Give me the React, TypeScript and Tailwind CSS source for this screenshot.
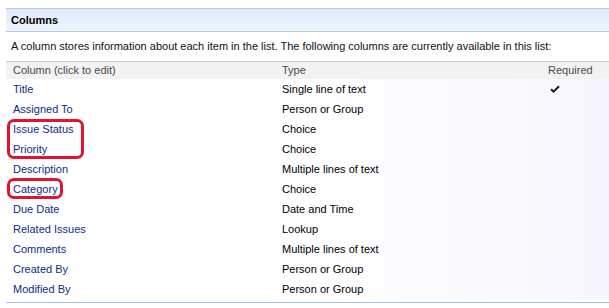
import React from "react";

const rows: { name: string; type: string; req?: boolean }[] = [
  { name: "Title", type: "Single line of text", req: true },
  { name: "Assigned To", type: "Person or Group" },
  { name: "Issue Status", type: "Choice" },
  { name: "Priority", type: "Choice" },
  { name: "Description", type: "Multiple lines of text" },
  { name: "Category", type: "Choice" },
  { name: "Due Date", type: "Date and Time" },
  { name: "Related Issues", type: "Lookup" },
  { name: "Comments", type: "Multiple lines of text" },
  { name: "Created By", type: "Person or Group" },
  { name: "Modified By", type: "Person or Group" },
];

export default function App() {
  return (
    <div
      className="w-[609px] h-[308px] bg-white overflow-hidden pl-[6px] pt-[8px] text-[11px] leading-none"
      style={{ fontFamily: "Tahoma, 'Liberation Sans', Arial, sans-serif" }}
    >
      <div className="h-[24px] border-t border-b border-[#b3cbec] bg-gradient-to-b from-[#dfeafb] to-[#eef4fd] flex items-center pl-[5px] pt-[1px] font-bold text-black">
        Columns
      </div>
      <div className="h-[29px] flex items-center pl-[5px] text-[#111]">
        A column stores information about each item in the list. The following columns are currently available in this list:
      </div>
      <div className="relative border-b border-[#a8c3e0] pb-[3px]">
        <div className="h-[18px] border-t border-[#c8c8c8] bg-[#f2f2f2] flex items-center text-[#4a4a4a]">
          <div className="w-[276px] pl-[7px]">Column (click to edit)</div>
          <div className="w-[266px]">Type</div>
          <div>Required</div>
        </div>
        {rows.map((r) => (
          <div
            key={r.name}
            className="h-[20px] flex items-center bg-gradient-to-r from-white via-white to-[#f7f6fd]"
          >
            <div className="w-[276px] pl-[7px] text-[#0b2c8a]">{r.name}</div>
            <div className="w-[266px] text-black">{r.type}</div>
            {r.req ? (
              <svg width="10" height="8" viewBox="0 0 10 8" className="ml-[2px] mb-[1px]">
                <path d="M1 4.2 L3.6 6.6 L9 1.2" fill="none" stroke="#1a1a1a" strokeWidth="2" />
              </svg>
            ) : null}
          </div>
        ))}
        <div className="absolute left-[1px] top-[58px] w-[77px] h-[40px] rounded-[7px] border-[3px] border-[#e3132f]" />
        <div className="absolute left-[1px] top-[117px] w-[56px] h-[21px] rounded-[7px] border-[3px] border-[#e3132f]" />
      </div>
    </div>
  );
}
